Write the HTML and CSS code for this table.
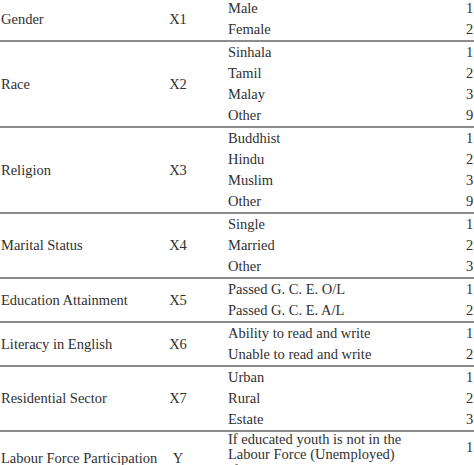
FILE: index.html
```html
<!DOCTYPE html>
<html>
<head>
<meta charset="utf-8">
<link rel="stylesheet" href="styles.css">
</head>
<body>
<table class="vars">
  <colgroup>
    <col class="c-label">
    <col class="c-code">
    <col class="c-cat">
    <col class="c-val">
  </colgroup>
  <tbody>
    <tr><td class="label" rowspan="2">Gender</td><td class="code" rowspan="2">X1</td><td class="cat">Male</td><td class="val">1</td></tr>
    <tr><td class="cat">Female</td><td class="val">2</td></tr>
  </tbody>
  <tbody>
    <tr><td class="label" rowspan="4">Race</td><td class="code" rowspan="4">X2</td><td class="cat">Sinhala</td><td class="val">1</td></tr>
    <tr><td class="cat">Tamil</td><td class="val">2</td></tr>
    <tr><td class="cat">Malay</td><td class="val">3</td></tr>
    <tr><td class="cat">Other</td><td class="val">9</td></tr>
  </tbody>
  <tbody>
    <tr><td class="label" rowspan="4">Religion</td><td class="code" rowspan="4">X3</td><td class="cat">Buddhist</td><td class="val">1</td></tr>
    <tr><td class="cat">Hindu</td><td class="val">2</td></tr>
    <tr><td class="cat">Muslim</td><td class="val">3</td></tr>
    <tr><td class="cat">Other</td><td class="val">9</td></tr>
  </tbody>
  <tbody>
    <tr><td class="label" rowspan="3">Marital Status</td><td class="code" rowspan="3">X4</td><td class="cat">Single</td><td class="val">1</td></tr>
    <tr><td class="cat">Married</td><td class="val">2</td></tr>
    <tr><td class="cat">Other</td><td class="val">3</td></tr>
  </tbody>
  <tbody>
    <tr><td class="label" rowspan="2">Education Attainment</td><td class="code" rowspan="2">X5</td><td class="cat">Passed G. C. E. O/L</td><td class="val">1</td></tr>
    <tr><td class="cat">Passed G. C. E. A/L</td><td class="val">2</td></tr>
  </tbody>
  <tbody>
    <tr><td class="label" rowspan="2">Literacy in English</td><td class="code" rowspan="2">X6</td><td class="cat">Ability to read and write</td><td class="val">1</td></tr>
    <tr><td class="cat">Unable to read and write</td><td class="val">2</td></tr>
  </tbody>
  <tbody>
    <tr><td class="label" rowspan="3">Residential Sector</td><td class="code" rowspan="3">X7</td><td class="cat">Urban</td><td class="val">1</td></tr>
    <tr><td class="cat">Rural</td><td class="val">2</td></tr>
    <tr><td class="cat">Estate</td><td class="val">3</td></tr>
  </tbody>
  <tbody>
    <tr><td class="label up" rowspan="2">Labour Force Participation</td><td class="code up" rowspan="2">Y</td><td class="cat multi">If educated youth is not in the<br>Labour Force (Unemployed)</td><td class="val">1</td></tr>
    <tr><td class="cat multi">If educated youth is in the Labour<br>Force (Employed)</td><td class="val">2</td></tr>
  </tbody>
</table>
</body>
</html>
```

FILE: styles.css
```css
html, body {
  margin: 0;
  padding: 0;
  background: #ffffff;
  overflow: hidden;
}

.vars {
  margin-top: -2px;
  border-collapse: collapse;
  table-layout: fixed;
  width: 530px;
  font-family: "Liberation Serif", "DejaVu Serif", serif;
  font-size: 14.5px;
  color: #303030;
}

.c-label { width: 160px; }
.c-code { width: 36px; }
.c-cat { width: 266px; }
.c-val { width: 68px; }

.vars tbody + tbody {
  border-top: 2px solid #8c8c8c;
}

.vars td {
  padding: 0;
  height: 21px;
  line-height: 21px;
  vertical-align: middle;
  white-space: nowrap;
}

.vars td.label {
  padding-left: 1px;
}

.vars td.code {
  text-align: center;
}

.vars td.up {
  padding-bottom: 9px;
}

.vars td.cat {
  padding-left: 32px;
}

.vars td.cat.multi {
  line-height: 15px;
  padding-top: 0;
  padding-bottom: 1px;
}

.vars td.val {
  padding-left: 4px;
}
```
